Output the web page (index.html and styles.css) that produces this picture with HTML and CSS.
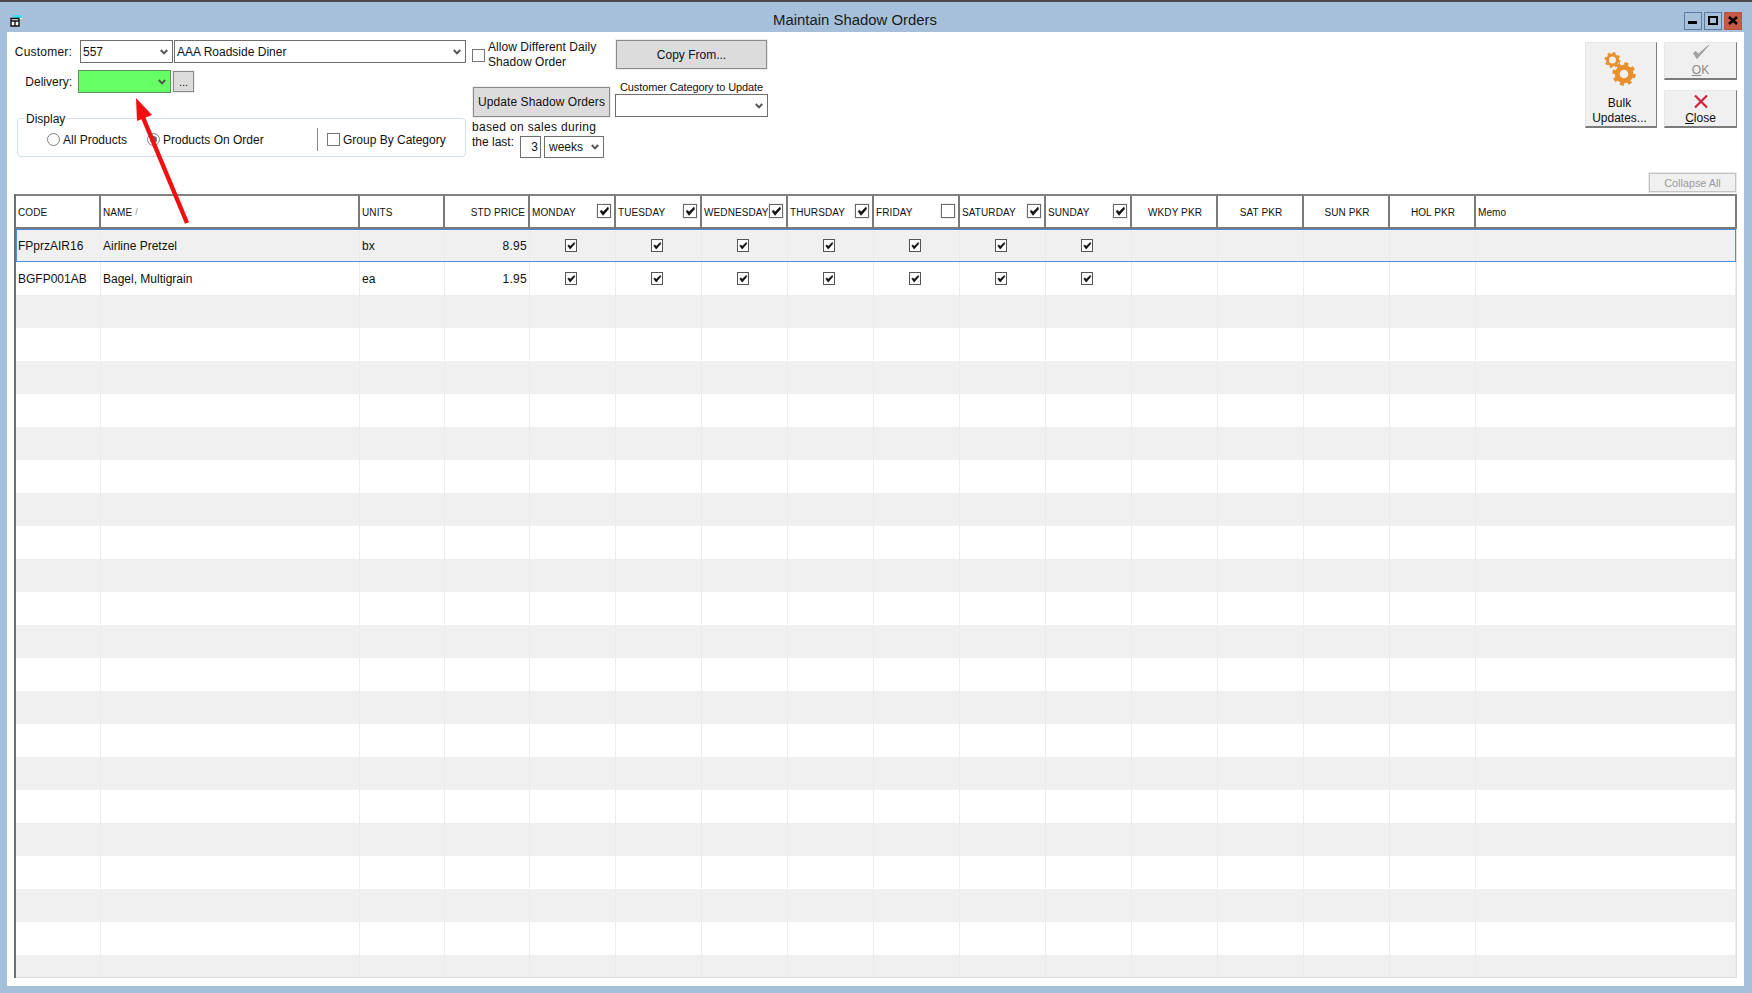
FILE: index.html
```html
<!DOCTYPE html>
<html lang="en">
<head>
<meta charset="utf-8">
<title>Maintain Shadow Orders</title>
<link rel="stylesheet" href="styles.css">
</head>
<body>
<svg class="defs" width="0" height="0" aria-hidden="true">
  <symbol id="tick" viewBox="0 0 12 12"><path d="M2 6.2 L3.6 5.2 L5 7 L10 2 L10.6 4 L5 10.4 Z" fill="#111" stroke="#111" stroke-width=".5"/></symbol>
  <symbol id="chev" viewBox="0 0 8 6"><path d="M.8 1 L4 4.4 L7.2 1" fill="none" stroke="#555" stroke-width="2"/></symbol>
</svg>
<div class="window">
  <header class="titlebar">
    <svg class="app-icon" width="16" height="12" viewBox="0 0 16 12"><path d="M3 0h8l1 3H4z" fill="#35e0ea"/><path d="M9 3h3v1H9z" fill="#fff"/><path d="M11 4h4v3h-4z" fill="#bbb"/><path d="M1 3.500h8v7.500H1zM1 6h8M5 6v5" fill="#fff" stroke="#111" stroke-width="1.400"/></svg>
    <h1 class="title">Maintain Shadow Orders</h1>
    <div class="win-buttons">
      <div class="win-btn"><svg width="18" height="18" viewBox="0 0 18 18"><rect x="4" y="9" width="9" height="3" fill="#000"/></svg></div>
      <div class="win-btn"><svg width="18" height="18" viewBox="0 0 18 18"><rect x="5" y="5" width="8" height="7" fill="none" stroke="#000" stroke-width="2"/></svg></div>
      <div class="win-btn win-close"><svg width="18" height="18" viewBox="0 0 18 18"><path d="M5 5L13 12M13 5L5 12" stroke="#000" stroke-width="2.600"/></svg></div>
    </div>
  </header>

  <main class="client">
    <section class="top">
      <div class="col-customer">
        <div class="form-row row-customer">
          <label class="field-label label-customer">Customer:</label>
          <div class="combo combo-code"><span>557</span><svg class="chev"><use href="#chev"/></svg></div>
          <div class="combo combo-name"><span>AAA Roadside Diner</span><svg class="chev"><use href="#chev"/></svg></div>
        </div>
        <div class="form-row row-delivery">
          <label class="field-label">Delivery:</label>
          <div class="combo combo-delivery"><span></span><svg class="chev"><use href="#chev"/></svg></div>
          <button class="btn btn-dots">...</button>
        </div>
        <div class="group">
          <span class="legend">Display</span>
          <label class="opt opt-all"><span class="radio"></span>All Products</label>
          <label class="opt opt-order"><span class="radio radio-on"></span>Products On Order</label>
          <span class="divider"></span>
          <label class="opt"><span class="box"></span>Group By Category</label>
        </div>
      </div>

      <div class="col-update">
        <label class="allow"><span class="box"></span><span>Allow Different Daily<br>Shadow Order</span></label>
        <button class="btn btn-update">Update Shadow Orders</button>
        <p class="based">based on sales during</p>
        <div class="last-row">
          <span>the last:</span>
          <div class="num">3</div>
          <div class="combo combo-weeks"><span>weeks</span><svg class="chev"><use href="#chev"/></svg></div>
        </div>
      </div>

      <div class="col-copy">
        <button class="btn btn-copy">Copy From...</button>
        <p class="cat-label">Customer Category to Update</p>
        <div class="combo combo-cat"><span></span><svg class="chev"><use href="#chev"/></svg></div>
      </div>

      <div class="actions">
        <button class="action action-bulk">
          <svg class="gears" width="34" height="38" viewBox="0 0 34 38">
            <g fill="none" stroke="#e8902c">
              <circle cx="9.500" cy="10" r="5" stroke-width="3"/>
              <circle cx="9.500" cy="10" r="6.600" stroke-width="2.600" stroke-dasharray="2.600 2.600"/>
              <circle cx="21" cy="24" r="6.800" stroke-width="5"/>
              <circle cx="21" cy="24" r="10" stroke-width="3.400" stroke-dasharray="3.900 3.950"/>
            </g>
          </svg>
          <span>Bulk<br>Updates...</span>
        </button>
        <div class="action-stack">
          <button class="action action-ok">
            <svg width="18" height="16" viewBox="0 0 18 16"><path d="M1.500 9 L5 14.500 L16.500 1.500 L6 10.500 L4 7.500 Z" fill="#a8a8a8" stroke="#8c8c8c" stroke-width=".8"/></svg>
            <span><u>O</u>K</span>
          </button>
          <button class="action action-close">
            <svg width="16" height="15" viewBox="0 0 16 15"><path d="M2 1.500L14 13.500M14 1.500L2 13.500" stroke="#d0223c" stroke-width="2.200"/></svg>
            <span><u>C</u>lose</span>
          </button>
        </div>
      </div>
    </section>

    <div class="collapse-row"><button class="btn-collapse">Collapse All</button></div>

    <section class="grid">
      <div class="cols head">
        <div class="th">CODE</div>
        <div class="th">NAME <span class="sort">/</span></div>
        <div class="th">UNITS</div>
        <div class="th th-right">STD PRICE</div>
        <div class="th th-day">MONDAY<span class="hbox"><svg><use href="#tick"/></svg></span></div>
        <div class="th th-day">TUESDAY<span class="hbox"><svg><use href="#tick"/></svg></span></div>
        <div class="th th-day">WEDNESDAY<span class="hbox"><svg><use href="#tick"/></svg></span></div>
        <div class="th th-day">THURSDAY<span class="hbox"><svg><use href="#tick"/></svg></span></div>
        <div class="th th-day">FRIDAY<span class="hbox"></span></div>
        <div class="th th-day">SATURDAY<span class="hbox"><svg><use href="#tick"/></svg></span></div>
        <div class="th th-day">SUNDAY<span class="hbox"><svg><use href="#tick"/></svg></span></div>
        <div class="th th-center">WKDY PKR</div>
        <div class="th th-center">SAT PKR</div>
        <div class="th th-center">SUN PKR</div>
        <div class="th th-center">HOL PKR</div>
        <div class="th">Memo</div>
      </div>
      <div class="body">
        <div class="cols row row-selected">
          <div class="td">FPprzAIR16</div>
          <div class="td">Airline Pretzel</div>
          <div class="td">bx</div>
          <div class="td td-right">8.95</div>
          <div class="td td-check"><span class="cb"><svg><use href="#tick"/></svg></span></div>
          <div class="td td-check"><span class="cb"><svg><use href="#tick"/></svg></span></div>
          <div class="td td-check"><span class="cb"><svg><use href="#tick"/></svg></span></div>
          <div class="td td-check"><span class="cb"><svg><use href="#tick"/></svg></span></div>
          <div class="td td-check"><span class="cb"><svg><use href="#tick"/></svg></span></div>
          <div class="td td-check"><span class="cb"><svg><use href="#tick"/></svg></span></div>
          <div class="td td-check"><span class="cb"><svg><use href="#tick"/></svg></span></div>
          <div class="td"></div><div class="td"></div><div class="td"></div><div class="td"></div><div class="td"></div>
        </div>
        <div class="cols row">
          <div class="td">BGFP001AB</div>
          <div class="td">Bagel, Multigrain</div>
          <div class="td">ea</div>
          <div class="td td-right">1.95</div>
          <div class="td td-check"><span class="cb"><svg><use href="#tick"/></svg></span></div>
          <div class="td td-check"><span class="cb"><svg><use href="#tick"/></svg></span></div>
          <div class="td td-check"><span class="cb"><svg><use href="#tick"/></svg></span></div>
          <div class="td td-check"><span class="cb"><svg><use href="#tick"/></svg></span></div>
          <div class="td td-check"><span class="cb"><svg><use href="#tick"/></svg></span></div>
          <div class="td td-check"><span class="cb"><svg><use href="#tick"/></svg></span></div>
          <div class="td td-check"><span class="cb"><svg><use href="#tick"/></svg></span></div>
          <div class="td"></div><div class="td"></div><div class="td"></div><div class="td"></div><div class="td"></div>
        </div>
        <div class="cols filler">
          <div class="td"></div><div class="td"></div><div class="td"></div><div class="td"></div>
          <div class="td"></div><div class="td"></div><div class="td"></div><div class="td"></div>
          <div class="td"></div><div class="td"></div><div class="td"></div><div class="td"></div>
          <div class="td"></div><div class="td"></div><div class="td"></div><div class="td"></div>
        </div>
      </div>
    </section>
  </main>
</div>

<svg class="arrow" width="80" height="140" viewBox="0 0 80 140" aria-hidden="true">
  <path d="M57 125 L12 17" stroke="#f20f0f" stroke-width="4.4" fill="none"/>
  <path d="M6 0 L7 23 L22 17 Z" fill="#f20f0f"/>
</svg>
</body>
</html>
```
FILE: styles.css
```css
* { box-sizing: border-box; }
html, body { margin: 0; padding: 0; }
body {
  width: 1752px;
  height: 993px;
  overflow: hidden;
  background: #a6c0dc;
  font-family: "Liberation Sans", Arial, sans-serif;
  font-size: 12px;
  color: #111;
  position: relative;
}
.defs { position: absolute; }
p { margin: 0; }
button { font: inherit; color: inherit; padding: 0; cursor: default; }

.window { display: flex; flex-direction: column; height: 100%; border-top: 2px solid #4a4a4a; }

.titlebar {
  height: 30px;
  flex: none;
  display: flex;
  align-items: center;
  position: relative;
  padding: 0 10px;
}
.app-icon { margin-top: 7px; }
.title {
  margin: 0;
  position: absolute;
  left: 0; right: 42px;
  top: 8px;
  text-align: center;
  font-size: 14.9px;
  font-weight: 400;
  line-height: 20px;
  color: #1a1a1a;
}
.win-buttons { margin-left: auto; margin-right: 0; display: flex; gap: 2px; margin-top: 8px; }
.win-btn {
  width: 18px; height: 18px;
  border: 1px solid #5d7ea3;
  display: flex;
}
.win-btn svg { margin: -1px; flex: none; }
.win-close { background: #c75a46; border-color: #b9563f; }

.client {
  flex: 1;
  margin: 0 8px 7px 7px;
  background: #fff;
  display: flex;
  flex-direction: column;
}

/* ---------- top form ---------- */
.top { display: flex; height: 141px; flex: none; }

.col-customer { margin-left: 7px; width: 452px; flex: none; padding-top: 8px; }
.form-row { display: flex; align-items: center; height: 23px; }
.row-customer { gap: 1px; }
.row-delivery { margin-top: 7px; }
.field-label { width: 58px; text-align: right; flex: none; }
.label-customer { letter-spacing: .2px; }

.combo {
  display: flex;
  align-items: center;
  justify-content: space-between;
  height: 23px;
  border: 1px solid #6e6e6e;
  background: #fff;
  padding: 0 4px 0 2px;
  flex: none;
}
.chev { width: 8px; height: 6px; flex: none; }
.combo-code { width: 93px; margin-left: 7px; }
.combo-name { width: 292px; }
.combo-delivery { width: 93px; margin-left: 6px; background: #66ff66; border-color: #5f8f5f; }
.btn {
  background: #dcdcdc;
  border: 1px solid #8a8a8a;
  outline: 1px solid #ececec;
}
.btn-dots { width: 21px; height: 21px; margin-left: 2px; font-size: 11px; }

.group {
  position: relative;
  margin: 25px 0 0 3px;
  width: 449px;
  height: 39px;
  border: 1px solid #d6e0e8;
  border-radius: 4px;
  display: flex;
  align-items: center;
  padding-left: 29px;
  padding-top: 4px;
}
.legend { position: absolute; left: 6px; top: -7px; background: #fff; padding: 0 2px; line-height: 15px; }
.opt { display: flex; align-items: center; gap: 3px; white-space: nowrap; }
.opt-all { width: 100px; }
.opt-order { width: 170px; }
.radio {
  width: 13px; height: 13px;
  border: 1px solid #808080;
  border-radius: 50%;
  background: #fff;
  flex: none;
  display: flex; align-items: center; justify-content: center;
}
.radio-on::after { content: ""; width: 7px; height: 7px; border-radius: 50%; background: #6a6a6a; }
.box { width: 13px; height: 13px; border: 1px solid #777; background: #fff; flex: none; display: block; }
.divider { width: 1px; height: 23px; background: #888; margin-right: 9px; }

.col-update { margin-left: 6px; width: 143px; flex: none; padding-top: 8px; }
.allow { display: flex; align-items: center; gap: 3px; line-height: 15px; letter-spacing: .05px; }
.btn-update { display: block; width: 137px; height: 30px; margin: 17px 0 0 1px; white-space: nowrap; letter-spacing: .08px; }
.based { margin-top: 3px; line-height: 15px; letter-spacing: .33px; white-space: nowrap; }
.last-row { display: flex; align-items: flex-start; line-height: 15px; }
.num {
  width: 21px; height: 22px;
  margin: 1px 3px 0 6px;
  border: 1px solid #6e6e6e;
  text-align: right;
  padding: 3px 2px 0 0;
}
.combo-weeks { width: 60px; height: 22px; margin-top: 1px; padding-left: 4px; }

.col-copy { margin-left: 0; width: 153px; flex: none; padding-top: 8px; }
.btn-copy { display: block; width: 151px; height: 29px; margin-left: 1px; }
.cat-label { font-size: 11px; letter-spacing: -.12px; text-align: center; line-height: 14px; margin-top: 11px; white-space: nowrap; }
.combo-cat { width: 153px; margin-top: 0; }

.actions { margin-left: auto; margin-right: 7px; display: flex; gap: 7px; padding-top: 10px; }
.action {
  background: #f0f0f0;
  border: 1px solid #e6e6e6;
  border-right: 1px solid #7c7c7c;
  border-bottom: 2px solid #7c7c7c;
  display: flex;
  flex-direction: column;
  align-items: center;
}
.action-bulk { width: 72px; height: 86px; line-height: 15px; padding: 7px 3px 0 0; }
.gears { margin-bottom: 8px; flex: none; }
.action-stack { display: flex; flex-direction: column; gap: 10px; width: 73px; }
.action-ok { height: 38px; color: #8a8a8a; padding-top: 1px; line-height: 15px; gap: 3px; }
.action-close { height: 38px; padding-top: 3px; line-height: 15px; gap: 2px; }

.collapse-row { height: 21px; flex: none; display: flex; justify-content: flex-end; padding-right: 8px; }
.btn-collapse {
  width: 87px; height: 19px;
  background: #f0f0f0;
  border: 1px solid #c4c4c4;
  outline: 1px solid #e8e8e8;
  outline-offset: 0;
  font-size: 10.8px;
  color: #9a9a9a;
}

/* ---------- data grid ---------- */
.grid {
  margin-left: 7px;
  width: 1723px;
  height: 784px;
  flex: none;
  display: flex;
  flex-direction: column;
  border-left: 2px solid #6f6f6f;
}
.cols {
  display: grid;
  grid-template-columns: 85px 259px 85px 85px repeat(11, 86px) 1fr;
}
.head {
  height: 35px;
  flex: none;
  border-top: 2px solid #808080;
  border-bottom: 2px solid #7a7a7a;
  font-size: 10px;
  letter-spacing: .1px;
}
.th {
  border-right: 2px solid #7a7a7a;
  display: flex;
  align-items: center;
  padding-left: 2px;
  padding-top: 1px;
  white-space: nowrap;
}
.th-right { justify-content: flex-end; padding-right: 3px; }
.th-center { justify-content: center; }
.th-day { justify-content: space-between; padding-right: 3px; }
.sort { color: #888; margin-left: 3px; font-size: 9px; }
.hbox {
  width: 14px; height: 14px;
  margin-top: -2px;
  border: 1px solid #6a6a6a;
  background: #fff;
  outline: 1px solid #eee;
  flex: none;
  display: block;
  position: relative;
}
.hbox svg { position: absolute; left: 0; top: 0; width: 12px; height: 12px; }

.body {
  flex: 1;
  min-height: 0;
  display: flex;
  flex-direction: column;
  border-right: 1px solid #e0e0e0;
  border-bottom: 1px solid #dedede;
}
.row { height: 33px; flex: none; position: relative; }
.row-selected { background: #f0f0f0; }
.row-selected::after {
  content: "";
  position: absolute;
  inset: 0;
  border: 1px solid #4a90e2;
}
.td {
  border-right: 1px solid #ececec;
  display: flex;
  align-items: center;
  padding-left: 2px;
  white-space: nowrap;
}
.td-right { justify-content: flex-end; padding-right: 2px; letter-spacing: .3px; }
.td-check { justify-content: center; padding-left: 0; padding-right: 3px; }
.cb {
  width: 12px; height: 13px;
  border: 1px solid #555;
  background: #fff;
  display: block;
  position: relative;
}
.cb svg { position: absolute; left: 0; top: 0; width: 10px; height: 11px; }
.filler {
  flex: 1;
  min-height: 0;
  background: repeating-linear-gradient(to bottom, #f0f0f0 0, #f0f0f0 33px, #fff 33px, #fff 66px);
}

.arrow { position: absolute; left: 130px; top: 98px; pointer-events: none; }
```
